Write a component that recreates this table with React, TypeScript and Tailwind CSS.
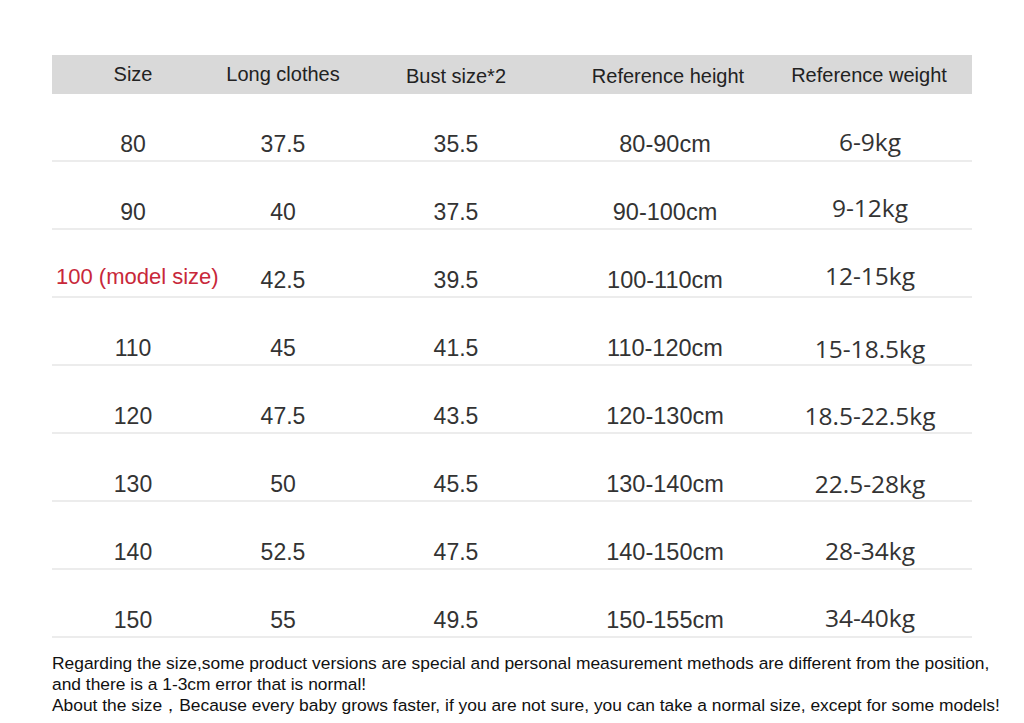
import React from 'react';

const rows = [
  ['80', '37.5', '35.5', '80-90cm', '6-9kg'],
  ['90', '40', '37.5', '90-100cm', '9-12kg'],
  ['100 (model size)', '42.5', '39.5', '100-110cm', '12-15kg'],
  ['110', '45', '41.5', '110-120cm', '15-18.5kg'],
  ['120', '47.5', '43.5', '120-130cm', '18.5-22.5kg'],
  ['130', '50', '45.5', '130-140cm', '22.5-28kg'],
  ['140', '52.5', '47.5', '140-150cm', '28-34kg'],
  ['150', '55', '49.5', '150-155cm', '34-40kg']
];

const weightPad = ['pb-[5px]', 'pb-[7px]', 'pb-[7px]', 'pb-[2px]', 'pb-[3px]', 'pb-[3px]', 'pb-[4px]', 'pb-[5px]'];

const cols = 'grid grid-cols-[162px_138px_208px_210px_200px]';

export default function App() {
  return <div className="w-[1024px] h-[723px] bg-white overflow-hidden font-['Liberation_Sans',sans-serif]">
      <div className="pt-[55px] pl-[52px] w-[972px]">
        <div className={`${cols} h-[39px] items-center bg-[#d9d9d9] text-[20px] text-[#222] text-center`}>
          <div className="pb-[1px]">Size</div>
          <div className="pb-[1px]">Long clothes</div>
          <div className="pt-[2px]">Bust size*2</div>
          <div className="pt-[2px] pl-[6px]">Reference height</div>
          <div className="pr-[2px]">Reference weight</div>
        </div>
        {rows.map((r, i) => <div key={r[0]} className={`${cols} h-[68px] items-end border-b-2 border-[#ececec] text-center text-[23px] leading-[26px] text-[#333]`}>
            <div className={i === 2 ? "whitespace-nowrap pl-[4px] text-[22px] text-[#c8283a] pb-[6px]" : "pb-[3px]"}>{r[0]}</div>
            <div className="pb-[3px]">{r[1]}</div>
            <div className="pb-[3px]">{r[2]}</div>
            <div className="pb-[3px] text-[23.5px]">{r[3]}</div>
            <div className={`font-['Open_Sans',sans-serif] text-[24.5px] ${weightPad[i]}`}>{r[4]}</div>
          </div>)}
      </div>
      <div className="pl-[52px] pt-[15px] text-[17.4px] leading-[21px] text-[#111]">
        <p>Regarding the size,some product versions are special and personal measurement methods are different from the position,</p>
        <p>and there is a 1-3cm error that is normal!</p>
        <p>About the size，Because every baby grows faster, if you are not sure, you can take a normal size, except for some models!</p>
      </div>
    </div>;
}
